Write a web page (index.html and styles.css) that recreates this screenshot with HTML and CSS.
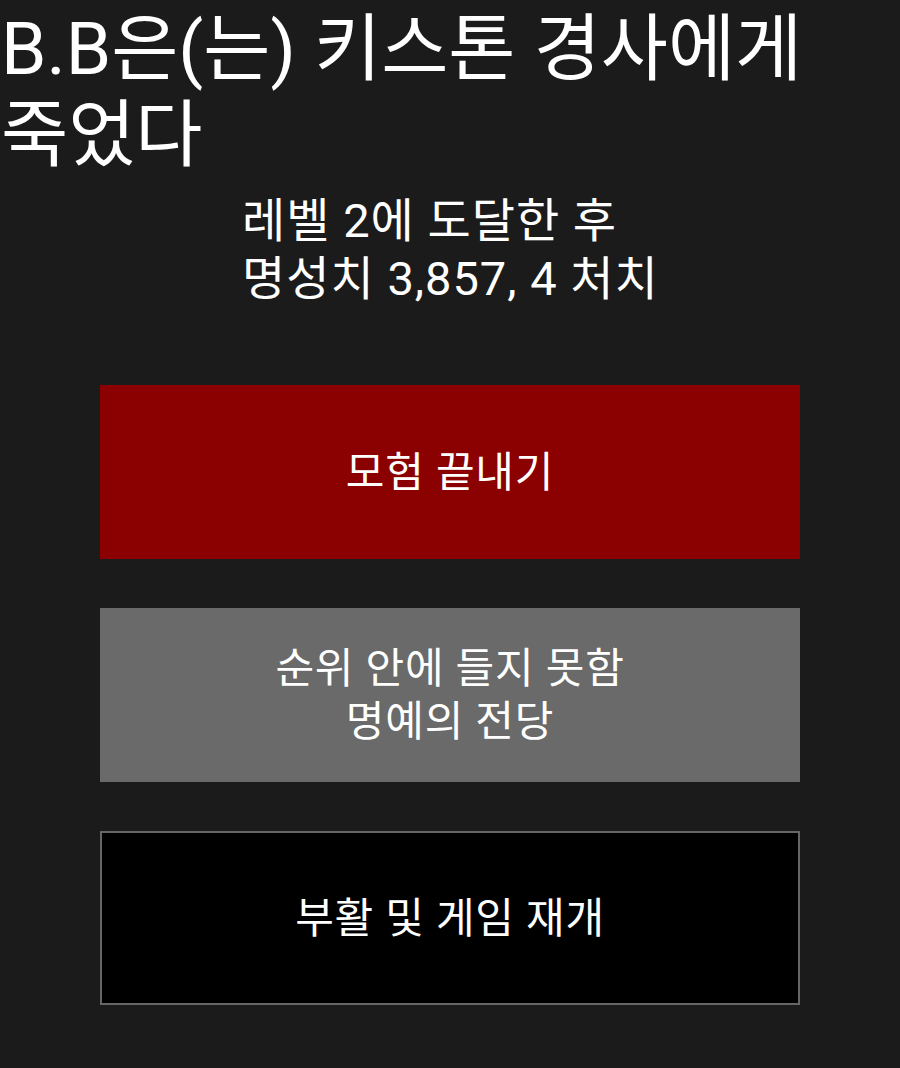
FILE: index.html
```html
<!DOCTYPE html>
<html lang="ko">
<head>
<meta charset="utf-8">
<title>사망</title>
<link rel="stylesheet" href="styles.css">
</head>
<body>
<main class="screen">
  <h1 class="title">B.B은(는) 키스톤 경사에게 죽었다</h1>
  <p class="summary">레벨 2에 도달한 후<br>명성치 3,857, 4 처치</p>
  <div class="actions">
    <button class="btn btn-end">모험 끝내기</button>
    <button class="btn btn-rank">순위 안에 들지 못함<br>명예의 전당</button>
    <button class="btn btn-revive">부활 및 게임 재개</button>
  </div>
</main>
</body>
</html>
```

FILE: styles.css
```css
html, body {
  margin: 0;
  padding: 0;
  background: #1b1b1b;
}
body {
  width: 900px;
  height: 1068px;
  overflow: hidden;
  font-family: Roboto, "Noto Sans CJK KR", sans-serif;
  color: #ffffff;
}
.screen {
  display: flex;
  flex-direction: column;
}
.title {
  margin: 0;
  padding: 6px 0 0 1px;
  font-size: 73px;
  font-weight: 400;
  line-height: 86px;
  width: 850px;
}
.summary {
  margin: 14px 0 0;
  padding-left: 242px;
  font-size: 47px;
  line-height: 58px;
  letter-spacing: 1px;
}
.actions {
  margin-top: 77px;
  padding: 0 100px;
  display: flex;
  flex-direction: column;
  gap: 49px;
}
.btn {
  height: 174px;
  border: none;
  margin: 0;
  padding: 0;
  font-family: inherit;
  font-size: 42px;
  line-height: 53px;
  letter-spacing: 0.8px;
  color: #ffffff;
  display: flex;
  align-items: center;
  justify-content: center;
  text-align: center;
}
.btn-end {
  background: #8b0000;
}
.btn-rank {
  background: #6a6a6a;
}
.btn-revive {
  background: #000000;
  border: 2px solid #666666;
}
```
